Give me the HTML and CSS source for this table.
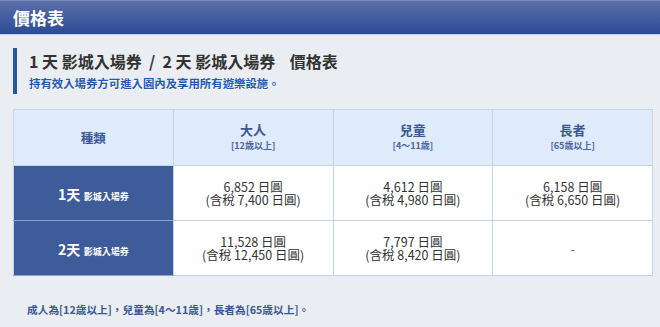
FILE: index.html
```html
<!DOCTYPE html>
<html lang="zh-Hant">
<head>
<meta charset="utf-8">
<title>價格表</title>
<link rel="stylesheet" href="styles.css">
</head>
<body>
<header class="topbar">價格表</header>
<main class="content">
  <div class="heading">
    <h1 class="title">1 天 影城入場券  /  2 天 影城入場券    價格表</h1>
    <p class="sub">持有效入場券方可進入園內及享用所有遊樂設施。</p>
  </div>
  <table class="prices">
    <thead>
      <tr>
        <th class="kind">種類</th>
        <th><span class="h-main">大人</span><span class="h-sub">[12歳以上]</span></th>
        <th><span class="h-main">兒童</span><span class="h-sub">[4〜11歳]</span></th>
        <th><span class="h-main">長者</span><span class="h-sub">[65歳以上]</span></th>
      </tr>
    </thead>
    <tbody>
      <tr>
        <th class="rowhead"><span class="days">1天</span> <span class="ticket">影城入場券</span></th>
        <td><span class="line">6,852 日圓</span><span class="line">(含稅 7,400 日圓)</span></td>
        <td><span class="line">4,612 日圓</span><span class="line">(含稅 4,980 日圓)</span></td>
        <td><span class="line">6,158 日圓</span><span class="line">(含稅 6,650 日圓)</span></td>
      </tr>
      <tr>
        <th class="rowhead"><span class="days">2天</span> <span class="ticket">影城入場券</span></th>
        <td><span class="line">11,528 日圓</span><span class="line">(含稅 12,450 日圓)</span></td>
        <td><span class="line">7,797 日圓</span><span class="line">(含稅 8,420 日圓)</span></td>
        <td class="dash">-</td>
      </tr>
    </tbody>
  </table>
  <p class="note">成人為[12歳以上]，兒童為[4〜11歳]，長者為[65歳以上]。</p>
</main>
</body>
</html>
```
FILE: styles.css
```css
html, body {
  margin: 0;
  padding: 0;
}
body {
  background: #eaedf1;
  font-family: "Noto Sans CJK TC", "DejaVu Sans", sans-serif;
  width: 660px;
  height: 327px;
  overflow: hidden;
}
.topbar {
  height: 33px;
  border-top: 1px solid #7b8cbc;
  background: linear-gradient(#5a6fa8, #2c4b94);
  color: #fff;
  font-weight: bold;
  font-size: 17px;
  line-height: 33px;
  padding-left: 13px;
  box-shadow: 0 1px 0 #c9d2e2;
}
.content {
  padding: 14px 7px 0 13px;
}
.heading {
  border-left: 4px solid #2556a8;
  padding: 1px 0 3px 12px;
  height: 42px;
}
.title {
  margin: 0;
  font-size: 16px;
  line-height: 24px;
  font-weight: bold;
  color: #333;
  white-space: pre;
}
.sub {
  margin: 2px 0 0;
  font-size: 11.4px;
  line-height: 16px;
  font-weight: bold;
  color: #2257b6;
  text-shadow: 0 1px 0 #fff;
}
.prices {
  margin-top: 15px;
  width: 640px;
  border-collapse: collapse;
  table-layout: fixed;
  background: #fff;
}
.prices th, .prices td {
  border: 1px solid #c3d3ea;
  text-align: center;
  padding: 0;
}
.prices thead th {
  height: 55px;
  background-color: #deeafb;
  background-image: repeating-conic-gradient(#e4eefc 0 25%, #d9e6f9 0 50%);
  background-size: 2px 2px;
  color: #3b5796;
  font-weight: bold;
}
.h-main {
  display: block;
  font-size: 13px;
  line-height: 16px;
}
.h-sub {
  display: block;
  font-size: 9px;
  line-height: 14px;
  margin-top: 1px;
  color: #4a65a0;
}
.kind {
  font-size: 12.5px;
}
.prices .rowhead {
  height: 54px;
  background-color: #3e5b9b;
  background-image: repeating-conic-gradient(#44619f 0 25%, #385595 0 50%);
  background-size: 2px 2px;
  color: #fff;
  font-weight: bold;
  border-color: #8fa4cc #c3d3ea;
}
.days {
  font-size: 14px;
}
.ticket {
  font-size: 9px;
}
.prices td {
  font-size: 12.5px;
  color: #333;
}
.line {
  display: block;
  line-height: 13.5px;
}
.prices td.dash {
  color: #666;
}
.note {
  margin: 26px 0 0 14px;
  font-size: 10.7px;
  line-height: 16px;
  font-weight: bold;
  color: #3a5796;
}
```
